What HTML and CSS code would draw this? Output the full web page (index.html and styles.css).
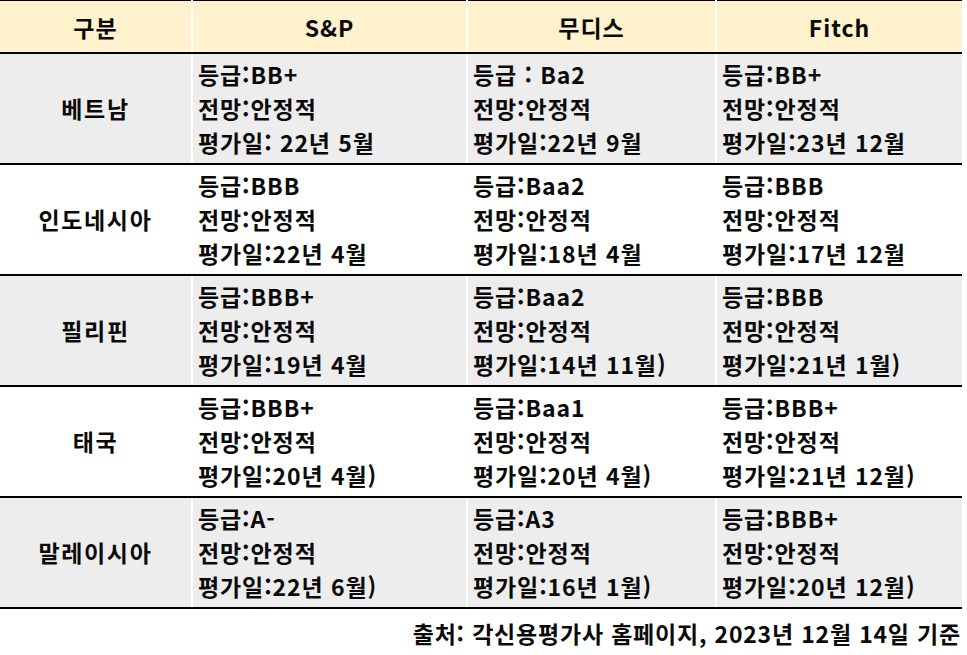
FILE: index.html
```html
<!DOCTYPE html>
<html lang="ko">
<head>
<meta charset="utf-8">
<link rel="stylesheet" href="styles.css">
</head>
<body>
<table class="rating">
  <colgroup>
    <col class="c1"><col class="c2"><col class="c3"><col class="c4">
  </colgroup>
  <thead>
    <tr><th>구분</th><th>S&amp;P</th><th>무디스</th><th>Fitch</th></tr>
  </thead>
  <tbody>
    <tr class="gray">
      <td class="country">베트남</td>
      <td>등급:BB+<br>전망:안정적<br>평가일: 22년 5월</td>
      <td>등급 : Ba2<br>전망:안정적<br>평가일:22년 9월</td>
      <td>등급:BB+<br>전망:안정적<br>평가일:23년 12월</td>
    </tr>
    <tr>
      <td class="country">인도네시아</td>
      <td>등급:BBB<br>전망:안정적<br>평가일:22년 4월</td>
      <td>등급:Baa2<br>전망:안정적<br>평가일:18년 4월</td>
      <td>등급:BBB<br>전망:안정적<br>평가일:17년 12월</td>
    </tr>
    <tr class="gray">
      <td class="country">필리핀</td>
      <td>등급:BBB+<br>전망:안정적<br>평가일:19년 4월</td>
      <td>등급:Baa2<br>전망:안정적<br>평가일:14년 11월)</td>
      <td>등급:BBB<br>전망:안정적<br>평가일:21년 1월)</td>
    </tr>
    <tr>
      <td class="country">태국</td>
      <td>등급:BBB+<br>전망:안정적<br>평가일:20년 4월)</td>
      <td>등급:Baa1<br>전망:안정적<br>평가일:20년 4월)</td>
      <td>등급:BBB+<br>전망:안정적<br>평가일:21년 12월)</td>
    </tr>
    <tr class="gray">
      <td class="country">말레이시아</td>
      <td>등급:A-<br>전망:안정적<br>평가일:22년 6월)</td>
      <td>등급:A3<br>전망:안정적<br>평가일:16년 1월)</td>
      <td>등급:BBB+<br>전망:안정적<br>평가일:20년 12월)</td>
    </tr>
  </tbody>
</table>
<div class="source">출처: 각신용평가사 홈페이지, 2023년 12월 14일 기준</div>
</body>
</html>
```
FILE: styles.css
```css
html, body {
  margin: 0;
  padding: 0;
  background: #ffffff;
}
body {
  font-family: "Noto Sans CJK KR", "Noto Sans", sans-serif;
  font-weight: 700;
  color: #0a0a0a;
  width: 967px;
}
.rating {
  width: 962px;
  border-collapse: collapse;
  table-layout: fixed;
  border-top: 1px solid #000;
}
.c1 { width: 192px; }
.c2 { width: 275px; }
.c3 { width: 249px; }
.c4 { width: 246px; }
.rating th {
  height: 51px;
  padding: 0;
  background: #fff2cc;
  font-size: 23px;
  font-weight: 700;
  text-align: center;
  letter-spacing: 1px;
  border-left: 2px solid #ffffff;
  border-bottom: 2px solid #000;
}
.rating th:first-child, .rating td:first-child { border-left: none; }
.rating td {
  padding: 3px 0 4px 5px;
  font-size: 23px;
  line-height: 34px;
  text-align: left;
  vertical-align: middle;
  border-left: 2px solid #ffffff;
  border-bottom: 2px solid #000;
  white-space: nowrap;
  letter-spacing: 0.9px;
}
.rating td.country {
  text-align: center;
  padding-left: 0;
  letter-spacing: 1.6px;
}
.rating tr.gray td { background: #ededed; }
.source {
  text-align: right;
  padding-right: 6px;
  font-size: 23px;
  line-height: 48px;
  letter-spacing: 0.8px;
}
```
